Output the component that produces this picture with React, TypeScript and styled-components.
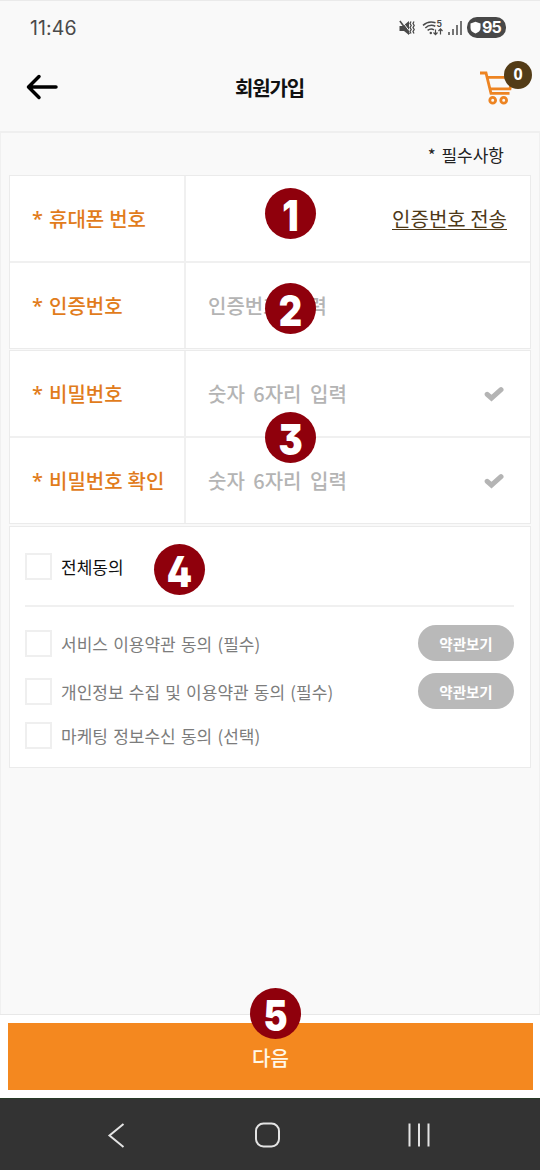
import React from 'react';
import styled, { createGlobalStyle } from 'styled-components';

const Global = createGlobalStyle`
  *, *::before, *::after { box-sizing: border-box; }
  body { margin: 0; background: #f9f9f9; font-family: 'Noto Sans CJK KR', 'Noto Sans', sans-serif; }
  button { font-family: inherit; border: 0; padding: 0; background: none; }
`;

const Screen = styled.div`
  position: relative;
  width: 540px;
  height: 1170px;
  display: flex;
  flex-direction: column;
  overflow: hidden;
  background: #f9f9f9;
`;

const StatusBar = styled.div`
  height: 56px;
  border-top: 1px solid #eaeaea;
  padding: 0 34px 2px 30px;
  display: flex;
  align-items: center;
  justify-content: space-between;
`;

const Clock = styled.span`
  font: 400 19.5px/24px Inter, sans-serif;
  letter-spacing: 0.1px;
  color: #4a4a4a;
  padding-top: 1px;
`;

const StatusIcons = styled.div`
  display: flex;
  align-items: center;
`;

const Battery = styled.span`
  width: 39px;
  height: 21px;
  margin-left: 5px;
  border-radius: 10px;
  background: #484848;
  color: #fff;
  display: flex;
  align-items: center;
  gap: 1px;
  padding-left: 3px;
  font: 700 16px/21px Inter, sans-serif;
  letter-spacing: -0.8px;
`;

const Header = styled.header`
  height: 77px;
  border-bottom: 2px solid #efefef;
  padding: 0 8px 0 26px;
  display: grid;
  grid-template-columns: 54px 1fr 54px;
  align-items: start;
`;

const BackButton = styled.button`
  display: block;
  width: 32px;
  height: 26px;
  margin-top: 18px;
`;

const Title = styled.h1`
  margin: 17px 0 0;
  font-size: 20px;
  line-height: 30px;
  font-weight: 700;
  letter-spacing: -1.1px;
  text-align: center;
  padding-right: 19px;
  color: #111;
`;

const Cart = styled.div`
  position: relative;
  height: 50px;
  padding-top: 14px;
`;

const CartCount = styled.span`
  position: absolute;
  right: 0;
  top: 5px;
  width: 28px;
  height: 28px;
  border-radius: 50%;
  background: #533c17;
  color: #fff;
  text-align: center;
  font: 700 16px/27px 'Open Sans', sans-serif;
`;

const Main = styled.main`
  flex: 1;
  border: solid #f0f0f0;
  border-width: 0 1px;
  padding: 0 8px;
`;

const RequiredNote = styled.p`
  height: 42px;
  margin: 0;
  padding: 9px 27px 0 0;
  text-align: right;
  font-size: 17px;
  line-height: 25px;
  word-spacing: 2px;
  color: #222;
`;

const Panel = styled.section<{ $gap?: number }>`
  background: #fff;
  border: 1px solid #ebebeb;
  margin-bottom: ${(p) => p.$gap ?? 0}px;
  width: 522px;
`;

const Row = styled.div`
  display: grid;
  grid-template-columns: 174px 2px 1fr;
  height: 85px;
  & + & { border-top: 2px solid #f0f0f0; height: 87px; }
`;

const Label = styled.div`
  display: flex;
  align-items: center;
  padding: 0 0 0 22px;
  font-size: 20px;
  font-weight: 500;
  word-spacing: 0.5px;
  color: #e17c1c;
  white-space: pre;
`;

const Star = styled.span`
  width: 17px;
  font-family: 'Noto Sans', sans-serif;
`;

const Divider = styled.div`
  background: #f0f0f0;
`;

const Field = styled.div`
  display: flex;
  align-items: center;
  justify-content: space-between;
  padding: 0 23px 0 22px;
  font-size: 20px;
  font-weight: 500;
  word-spacing: 4px;
  color: #b4b4b4;
`;

const SendCode = styled.button`
  margin-left: auto;
  padding-top: 1px;
  font-size: 20px;
  line-height: 21px;
  color: #4e3918;
  border-bottom: 1px solid #4e3918;
`;

const AgreePanel = styled(Panel)`
  height: 242px;
  padding: 0 16px 0 15px;
`;

const AgreeRow = styled.div<{ $h: number; $main?: boolean }>`
  height: ${(p) => p.$h}px;
  display: flex;
  align-items: center;
  font-size: 17px;
  word-spacing: 1.4px;
  color: ${(p) => (p.$main ? '#111' : '#7c7c7c')};
  ${(p) => p.$main && 'border-bottom: 2px solid #f0f0f0; margin-bottom: 12px;'}
`;

const Box = styled.span`
  width: 27px;
  height: 27px;
  border: 2px solid #efefef;
  background: #fff;
  margin-right: 9px;
`;

const TermsButton = styled.button`
  margin-left: auto;
  width: 96px;
  height: 36px;
  border-radius: 18px;
  background: #b9b9b9;
  color: #fff;
  font-size: 14.5px;
  font-weight: 700;
`;

const Footer = styled.footer`
  height: 84px;
  border-top: 1px solid #e8e8e8;
  background: #fff;
  padding: 8px 7px 8px 8px;
`;

const NextButton = styled.button`
  display: block;
  width: 525px;
  height: 67px;
  background: #f4881f;
  color: #fff8e8;
  font-size: 20px;
  font-weight: 500;
  padding-top: 2px;
`;

const NavBar = styled.nav`
  height: 72px;
  background: #333;
  border-top: 1px solid #283a28;
  display: flex;
  justify-content: space-between;
  align-items: center;
  padding: 1px 107px 0 106px;
`;

const Step = styled.span<{ $x: number; $y: number }>`
  position: absolute;
  left: ${(p) => p.$x}px;
  top: ${(p) => p.$y}px;
  width: 51px;
  height: 51px;
  border-radius: 50%;
  background: #8f000c;
  color: #fff;
  text-align: center;
`;

const StepDigit = styled.span`
  display: block;
  font: 900 42px/55px Inter, sans-serif;
  font-feature-settings: 'cv02', 'cv09';
  transform: scaleX(0.86);
`;

const MuteIcon = () => (
  <svg width="16" height="18" viewBox="0 0 16 18" fill="none" stroke="#4a4a4a">
    <path d="M.5 7h3.500L10 2v14l-5-4H.5z" fill="#4a4a4a" stroke="none" />
    <path d="M2.500 1.500l7.500 10" stroke="#f9f9f9" strokeWidth="1" />
    <path d="M.9 2l9.500 13" strokeWidth="1.600" />
    <path d="M12 2.500l-1 2 1.200 2-1.200 2 1.200 2-1.200 2 1 2M15 2.500l-1 2 1.200 2-1.200 2 1.200 2-1.200 2 1 2" strokeWidth="1.300" />
  </svg>
);

const WifiIcon = () => (
  <svg width="22" height="18" viewBox="0 0 22 18" fill="none" stroke="#4a4a4a" strokeWidth="1.500">
    <path d="M1 6.400C5 2.600 9.500 2.300 13.500 3.800M3.300 9C6.500 6 10 5.800 13.300 7.200M5.600 11.400c2.200-1.800 4.400-1.800 6.400-.6" />
    <circle cx="8.800" cy="14" r="1.200" fill="#4a4a4a" stroke="none" />
    <path d="M13.500 10.500v5M11.500 13.500l2 2.200 2-2.200M18.500 15.500v-5M16.500 12l2-2.200 2 2.200" strokeWidth="1.200" />
    <text x="14.400" y="8" fontFamily="Inter, sans-serif" fontSize="8.500" fontWeight="700" fill="#4a4a4a" stroke="none">5</text>
  </svg>
);

const SignalIcon = () => (
  <svg width="14" height="16" viewBox="0 0 14 16" stroke="#4a4a4a" strokeWidth="1.500">
    <path d="M1 15v-3M5 15V9M9 15V5M13 15V1" />
  </svg>
);

const CheckMark = styled.svg`
  margin-right: 3px;
`;

const Check = () => (
  <CheckMark width="20" height="16" viewBox="0 0 20 16" fill="none" stroke="#b4b4b4" strokeWidth="5">
    <path d="M3.200 8.300l4.300 3.900L17 3.600" strokeLinecap="round" />
  </CheckMark>
);

const fields = [
  [
    { label: '휴대폰 번호', action: '인증번호 전송' },
    { label: '인증번호', hint: '인증번호 입력' },
  ],
  [
    { label: '비밀번호', hint: '숫자 6자리 입력', check: true },
    { label: '비밀번호 확인', hint: '숫자 6자리 입력', check: true },
  ],
] as { label: string; hint?: string; action?: string; check?: boolean }[][];

const terms = [
  { text: '서비스 이용약관 동의 (필수)', view: true, h: 48 },
  { text: '개인정보 수집 및 이용약관 동의 (필수)', view: true, h: 48 },
  { text: '마케팅 정보수신 동의 (선택)', view: false, h: 40 },
];

const steps = [
  [265, 188],
  [265, 283],
  [265, 412],
  [154, 544],
  [250, 988],
];

export default function App() {
  return (
    <Screen>
      <Global />
      <StatusBar>
        <Clock>11:46</Clock>
        <StatusIcons>
          <MuteIcon />
          <svg width="7" height="1" />
          <WifiIcon />
          <svg width="4" height="1" />
          <SignalIcon />
          <Battery>
            <svg width="11" height="13" viewBox="0 0 11 13">
              <path d="M5.500 .7L10.500 2.500v4.500c0 2.800-2.200 4.400-5 5.500C2.700 11.400 .5 9.800 .5 7V2.500z" fill="#fff" />
            </svg>
            95
          </Battery>
        </StatusIcons>
      </StatusBar>
      <Header>
        <BackButton aria-label="뒤로">
          <svg width="32" height="26" viewBox="0 0 32 26" fill="none" stroke="#000" strokeWidth="3.500" strokeLinecap="round" strokeLinejoin="round">
            <path d="M2.500 13H30M13 2.500L2.500 13L13 23.500" />
          </svg>
        </BackButton>
        <Title>회원가입</Title>
        <Cart>
          <svg width="36" height="36" viewBox="0 0 36 36" fill="none" stroke="#ed8422" strokeWidth="2.800">
            <path d="M2 3H8L13 23.400H31.500M9.500 7.300H34L32 18.900H12" />
            <circle cx="14.700" cy="30.300" r="2.900" />
            <circle cx="25.700" cy="30.300" r="2.900" />
          </svg>
          <CartCount>0</CartCount>
        </Cart>
      </Header>
      <Main>
        <RequiredNote>* 필수사항</RequiredNote>
        {fields.map((group, i) => (
          <Panel key={i} $gap={i + 1}>
            {group.map((f) => (
              <Row key={f.label}>
                <Label>
                  <Star>*</Star>
                  {f.label}
                </Label>
                <Divider />
                <Field>
                  {f.hint}
                  {f.action && <SendCode>{f.action}</SendCode>}
                  {f.check && <Check />}
                </Field>
              </Row>
            ))}
          </Panel>
        ))}
        <AgreePanel>
          <AgreeRow $h={80} $main>
            <Box />
            전체동의
          </AgreeRow>
          {terms.map((t) => (
            <AgreeRow key={t.text} $h={t.h}>
              <Box />
              {t.text}
              {t.view && <TermsButton>약관보기</TermsButton>}
            </AgreeRow>
          ))}
        </AgreePanel>
      </Main>
      <Footer>
        <NextButton>다음</NextButton>
      </Footer>
      <NavBar>
        <svg width="20" height="28" viewBox="0 0 20 28" fill="none" stroke="#e4e4e4" strokeWidth="2">
          <path d="M17.500 3L3.500 14.500L17.500 26" />
        </svg>
        <svg width="26" height="26" viewBox="0 0 26 26" fill="none" stroke="#e4e4e4" strokeWidth="2">
          <rect x="2" y="1.500" width="23" height="23" rx="7.500" />
        </svg>
        <svg width="26" height="26" viewBox="0 0 26 26" stroke="#e4e4e4" strokeWidth="2">
          <path d="M2.500 1.500V24.500M12 1.500V24.500M21.500 1.500V24.500" />
        </svg>
      </NavBar>
      {steps.map(([x, y], i) => (
        <Step key={i} $x={x} $y={y}>
          <StepDigit>{i + 1}</StepDigit>
        </Step>
      ))}
    </Screen>
  );
}
